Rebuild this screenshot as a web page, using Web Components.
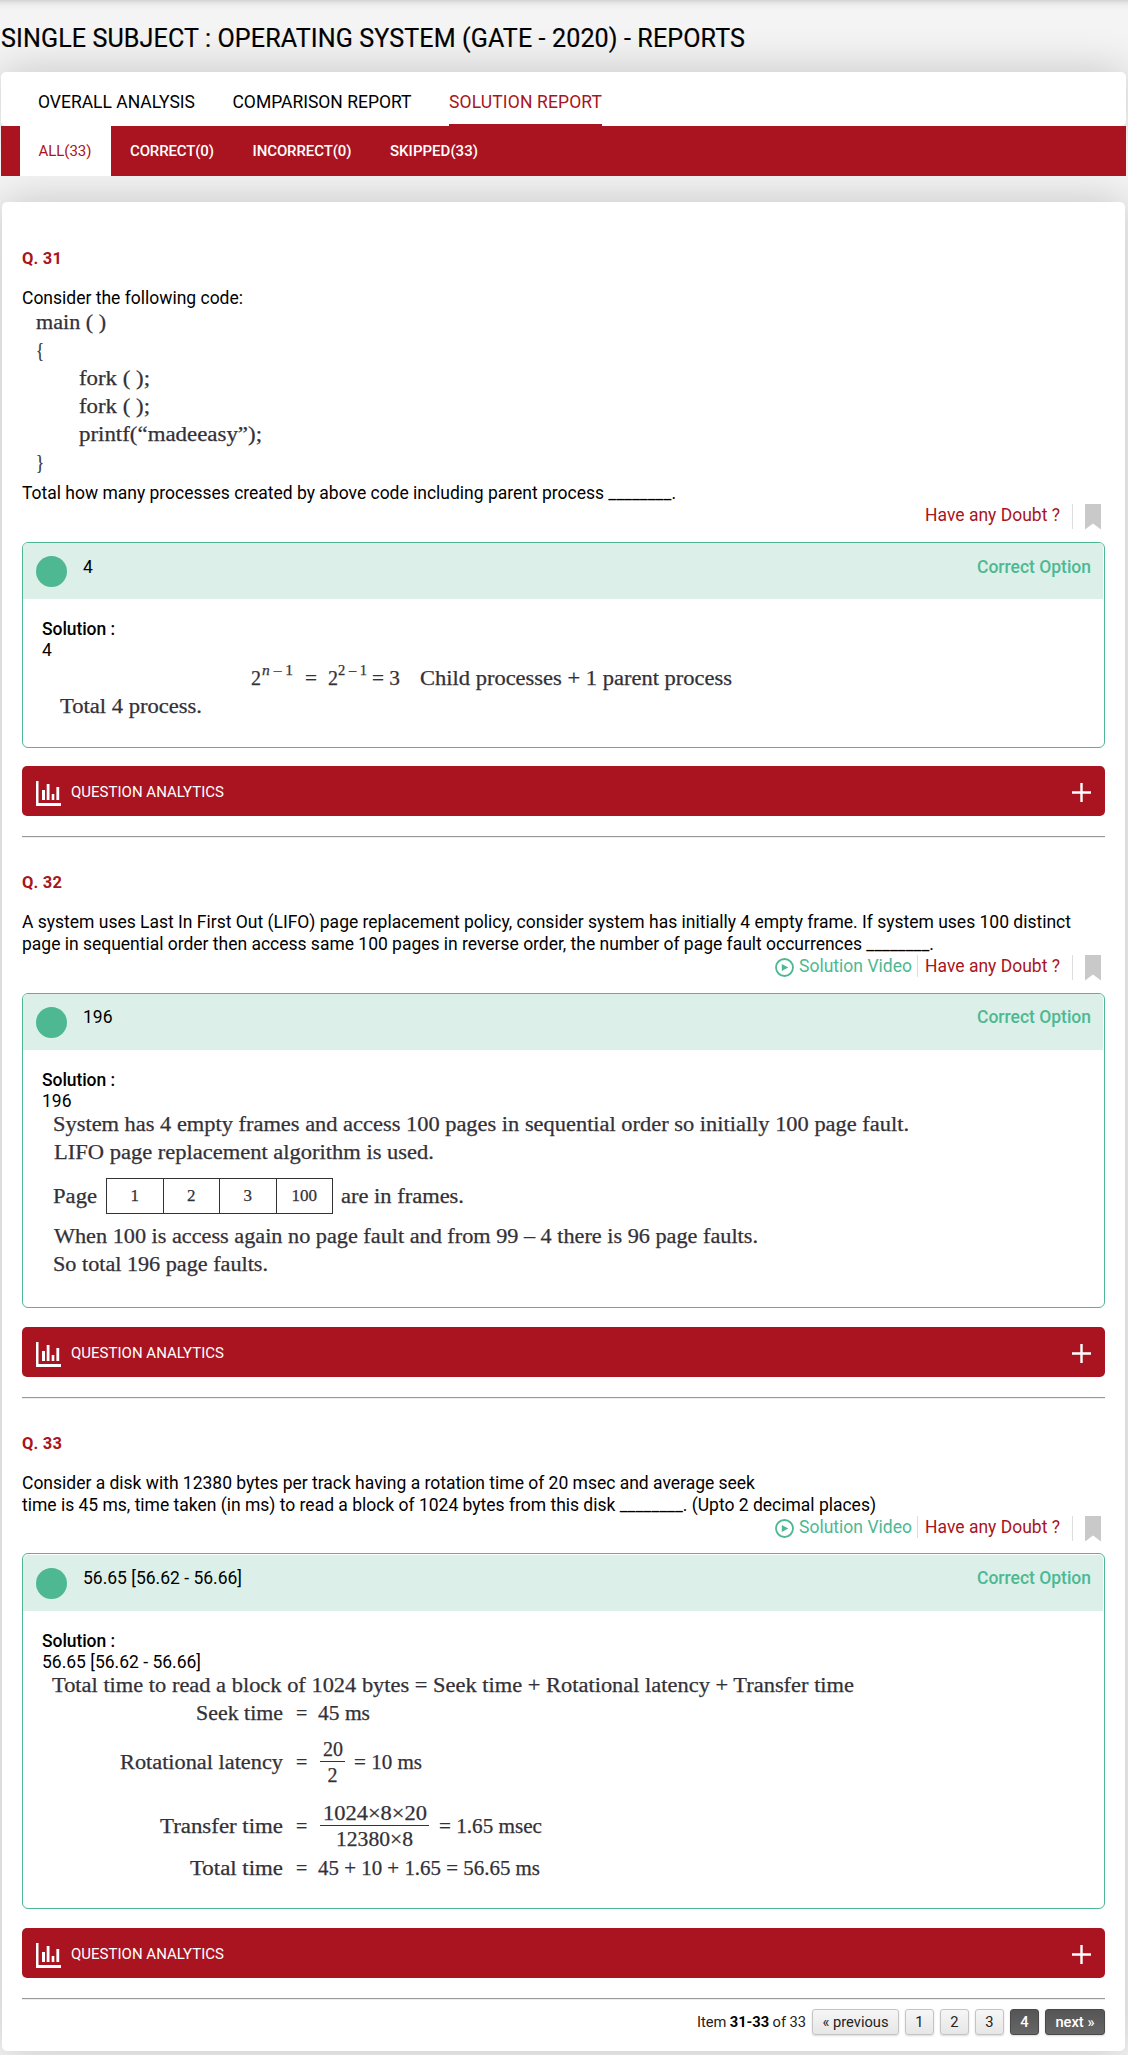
<!DOCTYPE html>
<html lang="en">
<head>
<meta charset="utf-8">
<title>Single Subject : Operating System (GATE - 2020) - Reports</title>
<style>
  body { margin: 0; background: #f4f4f4; font-family: Roboto, sans-serif; color: #000; }
</style>
</head>
<body>
<report-page>
  <report-header slot="head"></report-header>
  <question-item number="31" answer="4" style="--box-h:206px;--gap:18px">
    <p><fit-text w="221">Consider the following code:</fit-text></p>
    <math-figure style="margin-top:-1px;margin-bottom:6px">
      <math-row><fit-text stretch x="14" w="70">main ( )</fit-text></math-row>
      <math-row><fit-text stretch x="14" w="8">{</fit-text></math-row>
      <math-row><fit-text stretch x="57" w="71">fork ( );</fit-text></math-row>
      <math-row><fit-text stretch x="57" w="71">fork ( );</fit-text></math-row>
      <math-row><fit-text stretch x="57" w="183">printf(“madeeasy”);</fit-text></math-row>
      <math-row><fit-text stretch x="14" w="8">}</fit-text></math-row>
    </math-figure>
    <p><fit-text w="654">Total how many processes created by above code including parent process ________.</fit-text></p>
    <math-figure slot="solution" style="margin-top:3px">
      <math-row><fit-text stretch x="209" w="10">2</fit-text><fit-text stretch sup x="1" w="31"><i>n</i> – 1</fit-text><fit-text stretch x="12" w="12">=</fit-text><fit-text stretch x="11" w="10">2</fit-text><fit-text stretch sup x="0" w="29">2 – 1</fit-text><fit-text stretch x="5" w="28">= 3</fit-text><fit-text stretch x="20" w="312">Child processes + 1 parent process</fit-text></math-row>
      <math-row><fit-text stretch x="18" w="142">Total 4 process.</fit-text></math-row>
    </math-figure>
  </question-item>
  <question-item number="32" answer="196" video style="--box-h:315px;--gap:19px;--ans:13px">
    <p><fit-text w="1049">A system uses Last In First Out (LIFO) page replacement policy, consider system has initially 4 empty frame. If system uses 100 distinct</fit-text></p>
    <p><fit-text w="912">page in sequential order then access same 100 pages in reverse order, the number of page fault occurrences ________.</fit-text></p>
    <math-figure slot="solution" style="margin-top:-2px">
      <math-row><fit-text stretch x="11" w="856">System has 4 empty frames and access 100 pages in sequential order so initially 100 page fault.</fit-text></math-row>
      <math-row><fit-text stretch x="12" w="380">LIFO page replacement algorithm is used.</fit-text></math-row>
      <math-row style="--h:52px;padding-top:4px"><fit-text stretch x="11" w="44">Page</fit-text><page-frames values="1,2,3,100"></page-frames><fit-text stretch x="8" w="123">are in frames.</fit-text></math-row>
      <math-row><fit-text stretch x="12" w="704">When 100 is access again no page fault and from 99 – 4 there is 96 page faults.</fit-text></math-row>
      <math-row><fit-text stretch x="11" w="215">So total 196 page faults.</fit-text></math-row>
    </math-figure>
  </question-item>
  <question-item number="33" answer="56.65 [56.62 - 56.66]" video style="--box-h:356px;--gap:19px;--lift:1px;--ans:13px">
    <p><fit-text w="733">Consider a disk with 12380 bytes per track having a rotation time of 20 msec and average seek</fit-text></p>
    <p><fit-text w="854">time is 45 ms, time taken (in ms) to read a block of 1024 bytes from this disk ________. (Upto 2 decimal places)</fit-text></p>
    <math-figure slot="solution" style="margin-top:-2px">
      <math-row><fit-text stretch x="10" w="802">Total time to read a block of 1024 bytes = Seek time + Rotational latency + Transfer time</fit-text></math-row>
      <equation-row><fit-text stretch slot="label" w="87">Seek time</fit-text><fit-text stretch w="52">45 ms</fit-text></equation-row>
      <equation-row style="--h:70px"><fit-text stretch slot="label" w="163">Rotational latency</fit-text><math-fraction><fit-text stretch slot="top" w="20">20</fit-text><fit-text stretch w="10">2</fit-text></math-fraction><fit-text stretch x="9" w="68">= 10 ms</fit-text></equation-row>
      <equation-row style="--h:57px"><fit-text stretch slot="label" w="123">Transfer time</fit-text><math-fraction><fit-text stretch slot="top" w="104">1024×8×20</fit-text><fit-text stretch w="77">12380×8</fit-text></math-fraction><fit-text stretch x="10" w="103">= 1.65 msec</fit-text></equation-row>
      <equation-row><fit-text stretch slot="label" w="93">Total time</fit-text><fit-text stretch w="222">45 + 10 + 1.65 = 56.65 ms</fit-text></equation-row>
    </math-figure>
  </question-item>
  <page-nav></page-nav>
</report-page>

<script>
const define = (name, html, setup) => customElements.define(name, class extends HTMLElement {
  connectedCallback() {
    if (this.shadowRoot) return;
    const root = this.attachShadow({ mode: 'open' });
    root.innerHTML = typeof html === 'function' ? html(this) : html;
    if (setup) setup(this, root);
  }
});

define('math-fraction', `<style>
  :host{display:inline-flex;flex-direction:column;align-items:center;line-height:24px;margin-left:2px;flex:none}
  .top{border-bottom:1.5px solid #333;padding:0 2px 0 3px;display:flex;margin-bottom:1px}
</style><span class="top"><slot name="top"></slot></span><slot></slot>`);

define('page-frames', el => `<style>
  :host{display:flex;margin-left:9px;border:1.5px solid #333;height:34px;flex:none}
  span{width:55.5px;text-align:center;line-height:34px;font-size:17px}
  span+span{border-left:1px solid #333}
</style>${el.getAttribute('values').split(',').map(v => `<span>${v}</span>`).join('')}`);

define('math-row', `<style>:host{display:flex;align-items:center;height:var(--h,28px)}</style><slot></slot>`);

define('equation-row', `<style>
  :host{display:flex;align-items:center;height:var(--h,28px)}
  .label{width:241px;display:flex;justify-content:flex-end}
  .eq{margin:0 11px 0 13px;width:11px}
</style><span class="label"><slot name="label"></slot></span><span class="eq">=</span><slot></slot>`);

define('math-figure', `<style>
  :host{display:block;font:20px/28px "Liberation Serif",serif;color:#333137;-webkit-text-stroke:.25px #333137}
</style><slot></slot>`);

define('report-header', `<style>
  :host{display:block}
  h1{margin:0;padding:24px 0 18px 1px;font-size:25.1px;line-height:30px;font-weight:400;-webkit-text-stroke:.2px #000}
  nav{display:flex;box-sizing:border-box}
  .main{height:54px;margin:0 2px 0 1px;padding-left:37px;background:#fff;border-radius:5px;box-shadow:0 0 45px rgba(0,0,0,.2);font-size:17.5px;line-height:22px}
  .main a{padding-top:19px;height:33px;margin-right:37.5px;border-bottom:2px solid transparent}
  .main .on{color:#a91420;border-color:#a91420}
  .sub{position:relative;z-index:1;height:50px;margin:0 2px 0 1px;padding-left:19px;background:#a91420;font-size:15px;line-height:20px;color:#fff;font-weight:500}
  .sub a{padding:15px 20px 15px 18.5px}
  .sub .on{background:#fff;color:#a91420;font-weight:400}
</style>
<h1><fit-text w="744">SINGLE SUBJECT : OPERATING SYSTEM (GATE - 2020) - REPORTS</fit-text></h1>
<nav class="main"><a><fit-text w="157">OVERALL ANALYSIS</fit-text></a><a><fit-text w="179">COMPARISON REPORT</fit-text></a><a class="on"><fit-text w="153">SOLUTION REPORT</fit-text></a></nav>
<nav class="sub"><a class="on"><fit-text w="53">ALL(33)</fit-text></a><a><fit-text w="84">CORRECT(0)</fit-text></a><a><fit-text w="99">INCORRECT(0)</fit-text></a><a><fit-text w="88">SKIPPED(33)</fit-text></a></nav>`);

define('report-page', `<style>
  :host{display:block;height:2055px;overflow:hidden;background:linear-gradient(#d3d3d3,#e6e6e6 3px,#f1f1f1 7px,#f4f4f4 12px)}
  main{box-sizing:border-box;height:1849px;margin:26px 3px 0 2px;padding:47px 20px 0;background:#fff;border-radius:5px;box-shadow:0 0 45px rgba(0,0,0,.2)}
</style><slot name="head"></slot><main><slot></slot></main>`);

define('analytics-bar', `<style>
  :host{display:flex;align-items:center;box-sizing:border-box;height:50px;padding:0 14px;background:#a91420;border-radius:5px;color:#fff;font-size:15px}
  .label{margin-left:10px;flex:1;padding-bottom:5px;margin-top:7px}
  .chart{margin-top:5px}
  .plus{margin-top:2px}
</style>
<svg class="chart" width="25" height="25" viewBox="0 0 25 25" fill="#fff"><path d="M0 0h2.5v22H25v3H0zM6 9h3v10H6zM10.7 3h2.8v16h-2.8zM15.7 13h2.6v6h-2.6zM20.4 6h2.8v13h-2.8z"/></svg>
<span class="label"><fit-text w="153">QUESTION ANALYTICS</fit-text></span>
<svg class="plus" width="19" height="19" viewBox="0 0 19 19"><path d="M0 9.5h19M9.5 0v19" stroke="#fff" stroke-width="2.4"/></svg>`);

define('question-actions', el => `<style>
  :host{display:flex;justify-content:flex-end;align-items:flex-start;height:38px;font-size:17.5px;line-height:22px;color:#a91420}
  .video{display:flex;color:#4db892}
  .video svg{margin:3px 5px 0 0}
  i{width:1px;background:#ddd}
  .a{height:22px;margin:0 7px 0 5px}
  .b{height:25px;margin:0 12px 0 12px}
  .mark{margin-right:4px}
</style>
${el.hasAttribute('video') ? `<span class="video"><svg width="19" height="19" viewBox="0 0 19 19"><circle cx="9.5" cy="9.5" r="8.5" fill="none" stroke="#4db892" stroke-width="1.8"/><path d="M6.8 5.9v7.2l6.5-3.6z" fill="#4db892"/></svg><fit-text w="113">Solution Video</fit-text></span><i class="a"></i>` : ''}
<fit-text w="135">Have any Doubt ?</fit-text><i class="b"></i>
<svg class="mark" width="16" height="26" viewBox="0 0 16 26"><path d="M0 0h16v25.5l-8-6-8 6z" fill="#c9c9c9"/></svg>`);

define('answer-box', el => `<style>
  :host{display:block;box-sizing:border-box;height:var(--box-h);margin-top:calc(0px - var(--lift,0px));padding-top:var(--lift,0px);border:1px solid #4db892;border-radius:6px;font-size:17.5px}
  header{display:flex;align-items:flex-start;height:56px;margin-right:1px;padding:0 12px 0 13px;box-sizing:border-box;background:#dcf0e9;border-radius:5px 4px 0 0;line-height:20px}
  .dot{width:31px;height:31px;border-radius:50%;background:#4db892;margin:13px 16px 0 0}
  .ans{flex:1;margin-top:var(--ans,14px)}
  b{font-weight:500;color:#4db892;margin-top:var(--ans,14px)}
  section{padding:20px 0 0 19px;line-height:21px}
  strong{display:block;font-weight:500}
</style>
<header><span class="dot"></span><span class="ans">${el.getAttribute('answer')}</span><b><fit-text w="114">Correct Option</fit-text></b></header>
<section><strong><fit-text w="73">Solution :</fit-text></strong><div>${el.getAttribute('answer')}</div><slot></slot></section>`);

define('question-item', el => `<style>
  :host{display:block}
  h2{margin:0 0 18px;font-size:16.5px;line-height:20px;font-weight:700;color:#a91420}
  .q{font-size:17.5px;line-height:22px}
  ::slotted(p){margin:0;height:22px}
  analytics-bar{margin-top:var(--gap)}
  hr{margin:20px 0 35px;height:2px;border:0;box-sizing:border-box;border-top:1px solid #999;border-bottom:1px solid #eee}
  :host([number="33"]) hr{margin-bottom:0}
</style>
<h2><fit-text w="40">Q. ${el.getAttribute('number')}</fit-text></h2>
<div class="q"><slot></slot></div>
<question-actions ${el.hasAttribute('video') ? 'video' : ''}></question-actions>
<answer-box answer="${el.getAttribute('answer')}"><slot name="solution"></slot></answer-box>
<analytics-bar></analytics-bar><hr>`);

define('page-nav', `<style>
  :host{display:flex;justify-content:flex-end;align-items:center;margin-top:9px;height:26px;font-size:14.7px;color:#222}
  b{font-weight:700;color:#000}
  a{box-sizing:border-box;height:26px;line-height:24px;margin-left:6px;text-align:center;border:1px solid #c4c4c4;border-radius:3px;background:linear-gradient(#f6f6f6,#e6e6e6);box-shadow:0 1px 2px rgba(0,0,0,.15)}
  .n{width:29px}
  .dark{background:linear-gradient(#555,#666);border-color:#4a4a4a;color:#fff;font-weight:500}
</style>
<fit-text w="109">Item <b>31-33</b> of 33</fit-text><a style="width:87px">« previous</a><a class="n">1</a><a class="n">2</a><a class="n">3</a><a class="n dark">4</a><a class="dark" style="width:60px">next »</a>`);

/* Text run set to the width given in "w": by tracking, or with "stretch" by widening the glyphs.
   Defined last, so that every ancestor already passes its font down when the run is measured. */
define('fit-text', `<style>
  :host{display:inline-block;white-space:pre;flex:none;transform-origin:0 50%}
  :host([sup]){font-size:15px}
</style><slot></slot>`, el => {
  if (el.hasAttribute('x')) el.style.marginLeft = el.getAttribute('x') + 'px';
  const w = parseFloat(el.getAttribute('w'));
  if (!w) return;
  const natural = el.getBoundingClientRect().width;
  if (el.hasAttribute('stretch')) {
    el.style.transform = (el.hasAttribute('sup') ? 'translateY(-8px) ' : '') + `scaleX(${w / natural})`;
    el.style.width = w + 'px';
    el.style.transformOrigin = '0 50%';
    return;
  }
  const n = el.textContent.length;
  const s = (w - natural) / (n - 1);
  el.style.letterSpacing = s + 'px';
  el.style.marginRight = -s + 'px';
});
</script>
</body>
</html>
